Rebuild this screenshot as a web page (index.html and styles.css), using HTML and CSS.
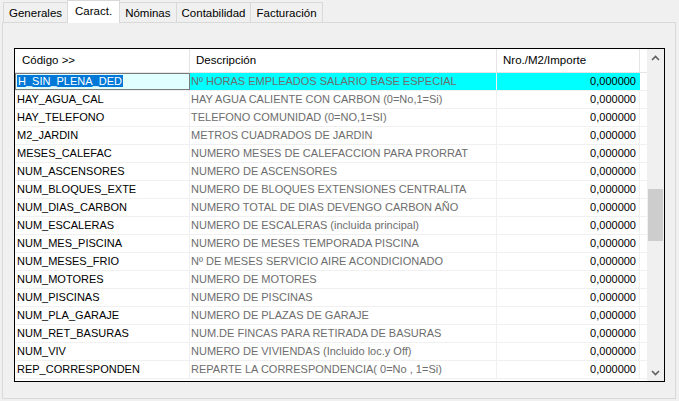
FILE: index.html
```html
<!DOCTYPE html>
<html lang="es">
<head>
    <meta charset="UTF-8">
    <title>Características</title>
    <link rel="stylesheet" href="styles.css">
</head>
<body>
    <div class="tabs">
        <div class="tab">Generales</div>
        <div class="tab tab-on">Caract.</div>
        <div class="tab">Nóminas</div>
        <div class="tab">Contabilidad</div>
        <div class="tab">Facturación</div>
    </div>
    <div class="page">
        <div class="grid">
            <div class="grid-body">
                <div class="row head">
                    <div class="c1">Código &gt;&gt;</div>
                    <div class="c2">Descripción</div>
                    <div class="c3">Nro./M2/Importe</div>
                    <div class="fill"></div>
                </div>
                <div class="row sel">
                    <div class="c1 focus"><span class="hl">H_SIN_PLENA_DED</span></div>
                    <div class="c2">Nº HORAS EMPLEADOS SALARIO BASE ESPECIAL</div>
                    <div class="c3">0,000000</div>
                    <div class="fill"></div>
                </div>
                <div class="row"><div class="c1">HAY_AGUA_CAL</div><div class="c2">HAY AGUA CALIENTE CON CARBON (0=No,1=Si)</div><div class="c3">0,000000</div><div class="fill"></div></div>
                <div class="row"><div class="c1">HAY_TELEFONO</div><div class="c2">TELEFONO COMUNIDAD (0=NO,1=SI)</div><div class="c3">0,000000</div><div class="fill"></div></div>
                <div class="row"><div class="c1">M2_JARDIN</div><div class="c2">METROS CUADRADOS DE JARDIN</div><div class="c3">0,000000</div><div class="fill"></div></div>
                <div class="row"><div class="c1">MESES_CALEFAC</div><div class="c2">NUMERO MESES DE CALEFACCION PARA PRORRAT</div><div class="c3">0,000000</div><div class="fill"></div></div>
                <div class="row"><div class="c1">NUM_ASCENSORES</div><div class="c2">NUMERO DE ASCENSORES</div><div class="c3">0,000000</div><div class="fill"></div></div>
                <div class="row"><div class="c1">NUM_BLOQUES_EXTE</div><div class="c2">NUMERO DE BLOQUES EXTENSIONES CENTRALITA</div><div class="c3">0,000000</div><div class="fill"></div></div>
                <div class="row"><div class="c1">NUM_DIAS_CARBON</div><div class="c2">NUMERO TOTAL DE DIAS DEVENGO CARBON AÑO</div><div class="c3">0,000000</div><div class="fill"></div></div>
                <div class="row"><div class="c1">NUM_ESCALERAS</div><div class="c2">NUMERO DE ESCALERAS (incluida principal)</div><div class="c3">0,000000</div><div class="fill"></div></div>
                <div class="row"><div class="c1">NUM_MES_PISCINA</div><div class="c2">NUMERO DE MESES TEMPORADA PISCINA</div><div class="c3">0,000000</div><div class="fill"></div></div>
                <div class="row"><div class="c1">NUM_MESES_FRIO</div><div class="c2">Nº DE MESES SERVICIO AIRE ACONDICIONADO</div><div class="c3">0,000000</div><div class="fill"></div></div>
                <div class="row"><div class="c1">NUM_MOTORES</div><div class="c2">NUMERO DE MOTORES</div><div class="c3">0,000000</div><div class="fill"></div></div>
                <div class="row"><div class="c1">NUM_PISCINAS</div><div class="c2">NUMERO DE PISCINAS</div><div class="c3">0,000000</div><div class="fill"></div></div>
                <div class="row"><div class="c1">NUM_PLA_GARAJE</div><div class="c2">NUMERO DE PLAZAS DE GARAJE</div><div class="c3">0,000000</div><div class="fill"></div></div>
                <div class="row"><div class="c1">NUM_RET_BASURAS</div><div class="c2">NUM.DE FINCAS PARA RETIRADA DE BASURAS</div><div class="c3">0,000000</div><div class="fill"></div></div>
                <div class="row"><div class="c1">NUM_VIV</div><div class="c2">NUMERO DE VIVIENDAS (Incluido loc.y Off)</div><div class="c3">0,000000</div><div class="fill"></div></div>
                <div class="row"><div class="c1">REP_CORRESPONDEN</div><div class="c2">REPARTE LA CORRESPONDENCIA( 0=No , 1=Si)</div><div class="c3">0,000000</div><div class="fill"></div></div>
            </div>
            <div class="vscroll">
                <div class="sbtn">
                    <svg width="9" height="6" viewBox="0 0 9 6"><path d="M1 5 L4.5 1.5 L8 5" fill="none" stroke="#606060" stroke-width="1.6"/></svg>
                </div>
                <div class="track"><div class="thumb"></div></div>
                <div class="sbtn">
                    <svg width="9" height="6" viewBox="0 0 9 6"><path d="M1 1 L4.5 4.5 L8 1" fill="none" stroke="#606060" stroke-width="1.6"/></svg>
                </div>
            </div>
        </div>
    </div>
</body>
</html>
```

FILE: styles.css
```css
body,div{margin:0;padding:0;}
body{background:#f0f0f0;font:11px/17px "Liberation Sans",Arial,sans-serif;color:#000;width:679px;height:401px;overflow:hidden;}

.tabs{display:flex;align-items:flex-end;height:22px;padding-left:3px;font-size:11.5px;}
.tab{height:20px;line-height:20px;padding:0 5px;border:1px solid #d9d9d9;border-bottom:0;margin-left:-1px;background:#f0f0f0;box-sizing:border-box;}
.tab:first-child{margin-left:0;}
.tab-on{height:23px;line-height:21px;padding:0 7px;background:#fff;margin-bottom:-1px;position:relative;z-index:1;}

.page{margin:0 3px 0 2px;height:377px;box-sizing:border-box;border:1px solid #d9d9d9;background:#f0f0f0;padding:25px 0 0 11px;}

.grid{display:flex;width:651px;height:334px;box-sizing:border-box;border:1px solid #000;background:#fff;}
.grid-body{flex:1;}
.row{display:flex;height:18px;border-bottom:1px solid #f0f0f0;box-sizing:border-box;}
.row > div{white-space:nowrap;overflow:hidden;box-sizing:border-box;border-right:1px solid #f0f0f0;}
.c1{width:175px;padding-left:2px;}
.c2{width:307px;padding-left:1px;color:#6d6d6d;}
.c3{width:143px;padding-right:3px;text-align:right;}
.row > .fill{flex:1;border-right:0;}

.head{height:24px;border-bottom:1px solid #e5e5e5;font-size:11.5px;}
.head > div{line-height:23px;color:#000;border-right-color:#e5e5e5;}
.head .c1{padding-left:7px;}
.head .c2{padding-left:6px;}
.head .c3{text-align:left;padding-left:6px;}

.sel .c2,.sel .c3{background:#00ffff;}
.sel .c3{border-right-color:#00ffff;}
.sel .focus{background:#e0ffff;border:1px solid #7a7a7a;line-height:15px;padding-left:1px;}
.hl{background:#0078d7;color:#fff;padding:0 1px;}

.vscroll{width:17px;display:flex;flex-direction:column;background:#f0f0f0;}
.sbtn{height:17px;display:flex;align-items:center;justify-content:center;}
.track{flex:1;}
.thumb{margin:123px 0 0 1px;width:15px;height:52px;background:#cdcdcd;}
```
